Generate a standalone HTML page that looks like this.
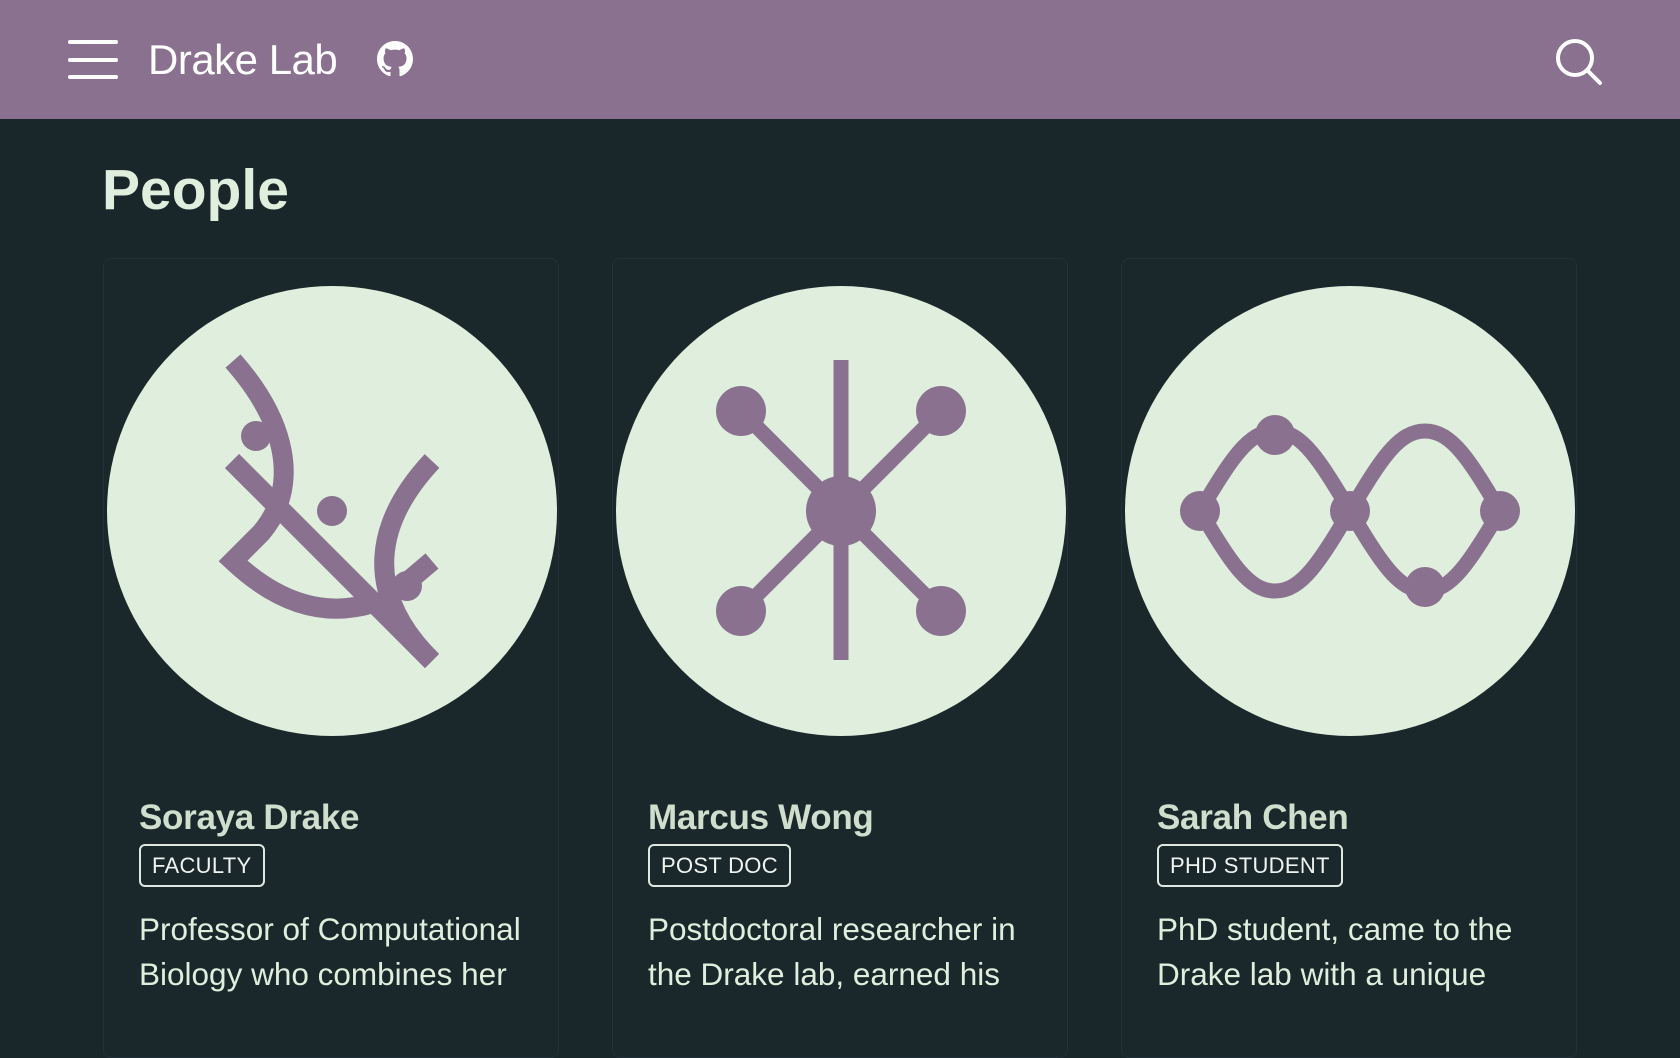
<!DOCTYPE html>
<html><head><meta charset="utf-8"><style>
*{margin:0;padding:0;box-sizing:border-box}
html,body{width:1680px;height:1000px;overflow:hidden;background:#19272a;font-family:"Liberation Sans",sans-serif}
.hdr{position:absolute;left:0;top:0;width:1680px;height:119px;background:#8a7190}
.title{position:absolute;left:148px;top:36px;font-size:42px;color:#fff;letter-spacing:-0.5px}
h1{position:absolute;left:102px;top:157px;font-size:57px;font-weight:bold;color:#dfeedd}
.card{position:absolute;top:258px;width:456px;height:800px;border:1px solid #22313a;border-radius:8px;background:#1a282b}
.card svg.av{position:absolute;left:2px;top:26px}
.name{position:absolute;left:35px;top:539px;font-size:35px;font-weight:bold;color:#cfdecd;letter-spacing:-0.3px}
.badge{position:absolute;left:35px;top:585px;height:43px;border:2px solid #dfe8e0;border-radius:6px;color:#f0f4f0;font-size:22px;line-height:39px;padding:0 11px;letter-spacing:0.3px}
.desc{position:absolute;left:35px;top:648px;width:410px;font-size:31.5px;line-height:45px;color:#e0eedd}
</style></head><body>
<div class="hdr">
<svg style="position:absolute;left:68px;top:39px" width="52" height="42"><g stroke="#fff" stroke-width="4" stroke-linecap="round"><line x1="2" y1="3" x2="48" y2="3"/><line x1="2" y1="21" x2="48" y2="21"/><line x1="2" y1="38" x2="48" y2="38"/></g></svg>
<div class="title">Drake Lab</div>
<svg style="position:absolute;left:377px;top:41px" width="36" height="36" viewBox="0 0 16 16"><path fill="#fff" d="M8 0C3.58 0 0 3.58 0 8c0 3.54 2.29 6.53 5.47 7.59.4.07.55-.17.55-.38 0-.19-.01-.82-.01-1.49-2.01.37-2.53-.49-2.69-.94-.09-.23-.48-.94-.82-1.13-.28-.15-.68-.52-.01-.53.63-.01 1.08.58 1.23.82.72 1.21 1.87.87 2.33.66.07-.52.28-.87.51-1.07-1.780-.2-3.640-.89-3.640-3.95 0-.87.31-1.59.82-2.150-.08-.2-.36-1.020.08-2.120 0 0 .67-.21 2.2.82.64-.18 1.32-.27 2-.27.68 0 1.36.09 2 .27 1.53-1.040 2.2-.82 2.2-.82.44 1.1.16 1.92.08 2.12.51.56.82 1.27.82 2.15 0 3.07-1.87 3.75-3.65 3.95.29.25.54.73.54 1.48 0 1.07-.01 1.93-.01 2.2 0 .21.15.46.55.38A8.013 8.013 0 0016 8c0-4.42-3.58-8-8-8z"/></svg>
<svg style="position:absolute;left:1554px;top:37px" width="50" height="50"><circle cx="21" cy="21" r="17" fill="none" stroke="#fff" stroke-width="4"/><line x1="33" y1="33" x2="46" y2="46" stroke="#fff" stroke-width="4" stroke-linecap="round"/></svg>
</div>
<h1>People</h1>

<div class="card" style="left:103px">
<svg class="av" width="452" height="452" viewBox="105 284 452 452">
<circle cx="331" cy="510" r="225" fill="#dfeedd"/>
<g fill="none" stroke="#8a7190" stroke-width="20" stroke-linejoin="miter">
<line x1="231" y1="460" x2="431" y2="660"/>
<path d="M232,360 C285,420 300,485 260,532 L232,560 Q300,624 372,602"/>
<path d="M431,460 C375,520 360,590 431,660"/>
<line x1="431" y1="560" x2="405" y2="582"/>
</g>
<g fill="#8a7190"><circle cx="255" cy="435" r="15"/><circle cx="331" cy="510" r="15"/><circle cx="406" cy="585" r="15"/></g>
</svg>
<div class="name">Soraya Drake</div>
<div class="badge">FACULTY</div>
<div class="desc">Professor of Computational Biology who combines her</div>
</div>

<div class="card" style="left:612px">
<svg class="av" width="452" height="452" viewBox="-226 -226 452 452">
<circle r="225" fill="#dfeedd"/>
<g stroke="#8a7190" stroke-width="15"><line x1="0" y1="-151" x2="0" y2="149"/><line x1="-100" y1="-100" x2="100" y2="100"/><line x1="100" y1="-100" x2="-100" y2="100"/></g>
<g fill="#8a7190"><circle r="35"/><circle cx="-100" cy="-100" r="25"/><circle cx="100" cy="-100" r="25"/><circle cx="-100" cy="100" r="25"/><circle cx="100" cy="100" r="25"/></g>
</svg>
<div class="name">Marcus Wong</div>
<div class="badge">POST DOC</div>
<div class="desc">Postdoctoral researcher in the Drake lab, earned his</div>
</div>

<div class="card" style="left:1121px">
<svg class="av" width="452" height="452" viewBox="-226 -226 452 452">
<circle r="225" fill="#dfeedd"/>
<path fill="none" stroke="#8a7190" stroke-width="15" d="M0,0 C-30,-50 -48,-80 -75,-80 C-102,-80 -120,-50 -150,0 C-120,50 -102,80 -75,80 C-48,80 -30,50 0,0 C30,-50 48,-80 75,-80 C102,-80 120,-50 150,0 C120,50 102,80 75,80 C48,80 30,50 0,0Z"/>
<g fill="#8a7190"><circle r="20"/><circle cx="-150" r="20"/><circle cx="150" r="20"/><circle cx="-75" cy="-76" r="20"/><circle cx="75" cy="76" r="20"/></g>
</svg>
<div class="name">Sarah Chen</div>
<div class="badge">PHD STUDENT</div>
<div class="desc">PhD student, came to the Drake lab with a unique</div>
</div>
</body></html>
